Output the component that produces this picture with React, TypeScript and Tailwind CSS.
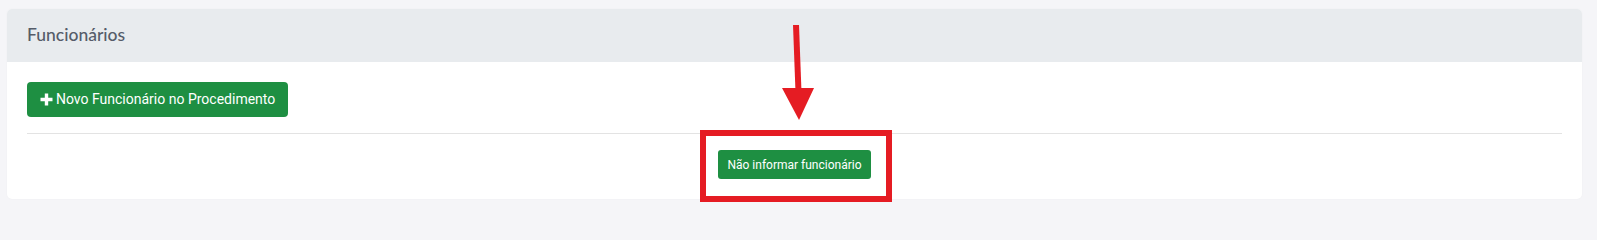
import React from 'react';

const PlusIcon: React.FC = () => (
  <svg width="13" height="13" viewBox="0 0 13 13" className="mr-[3px] shrink-0">
    <path d="M6.5 0.5v12M0.5 6.5h12" stroke="#ffffff" strokeWidth="3.4" strokeLinecap="butt" />
  </svg>
);

const App: React.FC = () => {
  return (
    <div className="relative min-h-screen w-full bg-[#f5f5f8] pt-[9px] pl-[7px] pr-[15px] pb-[12px]">
      <div className="overflow-hidden rounded-[5px] bg-white shadow-[0_0_2px_rgba(0,0,0,0.04)]">
        {/* Header */}
        <div className="flex h-[53px] items-center bg-[#e8ebee] px-5">
          <h3 className="text-[17.5px] font-medium text-[#555c69] [font-family:Lato,'Open_Sans',sans-serif]">
            Funcionários
          </h3>
        </div>

        {/* Body */}
        <div className="px-5 pt-5 pb-5 [font-family:Roboto,'Liberation_Sans',sans-serif]">
          <button className="flex h-[35px] items-center rounded-[4px] bg-[#1e8f42] px-[13px] text-[14px] text-white">
            <PlusIcon />
            Novo Funcionário no Procedimento
          </button>
          <hr className="mt-4 mb-4 border-t border-[#e3e3e3]" />
          <div className="flex justify-center">
            <button className="flex h-[29px] items-center rounded-[3px] bg-[#1e8f42] px-[9px] text-[12px] text-white">
              Não informar funcionário
            </button>
          </div>
        </div>
      </div>

      {/* Annotation overlay */}
      <div className="pointer-events-none absolute left-[700px] top-[130px] h-[72px] w-[192px] border-[6px] border-[#e51c23]" />
      <svg
        className="pointer-events-none absolute left-0 top-0"
        width="1597"
        height="211"
        viewBox="0 0 1597 211"
      >
        <path d="M796 25 L798.5 92" stroke="#e51c23" strokeWidth="6" fill="none" />
        <path d="M782 88 L814 88 L799 120 Z" fill="#e51c23" />
      </svg>
    </div>
  );
};

export default App;
